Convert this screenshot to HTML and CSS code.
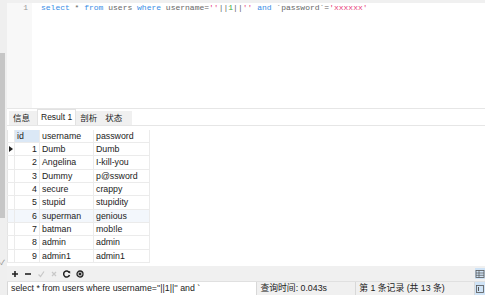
FILE: index.html
```html
<!DOCTYPE html>
<html lang="zh-CN">
<head>
    <meta charset="UTF-8">
    <title>查询</title>
    <link rel="stylesheet" href="styles.css">
</head>
<body>
    <div class="app">
        <div class="side">
            <div class="side-bar"></div>
            <div class="side-mark">✓</div>
        </div>
        <div class="main">
            <div class="editor">
                <div class="gutter">1</div>
                <div class="code"><span class="kw">select</span> * <span class="kw">from</span> users <span class="kw">where</span> username=<span class="str">''</span>||<span class="num">1</span>||<span class="str">''</span> <span class="kw">and</span> `password`=<span class="str">'xxxxxx'</span></div>
            </div>

            <div class="tabs">
                <div class="tab">信息</div>
                <div class="tab active">Result 1</div>
                <div class="tab">剖析</div>
                <div class="tab">状态</div>
            </div>

            <div class="grid-area">
                <table class="grid">
                    <tr class="head">
                        <td class="sel"></td>
                        <td class="c-id on">id</td>
                        <td class="c-user">username</td>
                        <td class="c-pass">password</td>
                    </tr>
                    <tr><td class="sel"><span class="arrow"></span></td><td class="c-id">1</td><td class="c-user">Dumb</td><td class="c-pass">Dumb</td></tr>
                    <tr><td class="sel"></td><td class="c-id">2</td><td class="c-user">Angelina</td><td class="c-pass">I-kill-you</td></tr>
                    <tr><td class="sel"></td><td class="c-id">3</td><td class="c-user">Dummy</td><td class="c-pass">p@ssword</td></tr>
                    <tr><td class="sel"></td><td class="c-id">4</td><td class="c-user">secure</td><td class="c-pass">crappy</td></tr>
                    <tr><td class="sel"></td><td class="c-id">5</td><td class="c-user">stupid</td><td class="c-pass">stupidity</td></tr>
                    <tr class="hover"><td class="sel"></td><td class="c-id">6</td><td class="c-user">superman</td><td class="c-pass">genious</td></tr>
                    <tr><td class="sel"></td><td class="c-id">7</td><td class="c-user">batman</td><td class="c-pass">mob!le</td></tr>
                    <tr><td class="sel"></td><td class="c-id">8</td><td class="c-user">admin</td><td class="c-pass">admin</td></tr>
                    <tr><td class="sel"></td><td class="c-id">9</td><td class="c-user">admin1</td><td class="c-pass">admin1</td></tr>
                </table>
            </div>

            <div class="toolbar">
                <div class="tools">
                    <svg viewBox="0 0 8 8"><path d="M4 1v6M1 4h6" stroke="#222" stroke-width="1.6"/></svg>
                    <svg viewBox="0 0 8 8"><path d="M1 4h6" stroke="#222" stroke-width="1.6"/></svg>
                    <svg viewBox="0 0 8 8"><path d="M1.5 4.5l2 2 3.5-5" stroke="#c8c8c8" stroke-width="1.2" fill="none"/></svg>
                    <svg viewBox="0 0 8 8"><path d="M2 2l4 4M6 2l-4 4" stroke="#c8c8c8" stroke-width="1.2"/></svg>
                    <svg viewBox="0 0 8 8"><path d="M6.3 2.6A3 3 0 1 0 6.5 5" stroke="#222" stroke-width="1.5" fill="none"/><path d="M4.6 1.2h2.6v2.6z" fill="#222"/></svg>
                    <svg viewBox="0 0 8 8"><circle cx="4" cy="4" r="3" stroke="#222" stroke-width="1.3" fill="none"/><path d="M2.6 2.6l2.8 2.8M5.4 2.6l-2.8 2.8" stroke="#222" stroke-width="1.2"/></svg>
                </div>
                <div class="view-btn">
                    <svg viewBox="0 0 10 10"><rect x="1" y="1.5" width="8" height="7" fill="none" stroke="#555" stroke-width="0.8"/><path d="M1 4h8M1 6.3h8M4 1.5v7" stroke="#555" stroke-width="0.7"/></svg>
                </div>
            </div>

            <div class="status">
                <div class="cell sql">select * from users where username=''||1||'' and `</div>
                <div class="cell time">查询时间: 0.043s</div>
                <div class="cell rec">第 1 条记录 (共 13 条)</div>
                <div class="view-btn">
                    <svg viewBox="0 0 10 10"><rect x="1.5" y="1.5" width="7" height="7" fill="none" stroke="#555" stroke-width="0.8"/><path d="M3.5 3v4" stroke="#555" stroke-width="1"/></svg>
                </div>
            </div>
        </div>
    </div>
</body>
</html>
```

FILE: styles.css
```css
body {
    margin: 0;
    font-family: "Liberation Sans", "Noto Sans CJK SC", sans-serif;
    color: #222;
    background-color: #fff;
}
.app {
    display: flex;
    width: 485px;
    height: 295px;
    overflow: hidden;
}
.side {
    width: 7px;
    flex-shrink: 0;
    background-color: #efefef;
    display: flex;
    flex-direction: column;
}
.side-bar {
    margin-top: 53px;
    width: 5px;
    height: 165px;
    background-color: #c6c6c6;
}
.side-mark {
    margin-top: 41px;
    font-size: 7px;
    color: #888;
    line-height: 8px;
}
.main {
    flex: 1;
    display: flex;
    flex-direction: column;
    min-width: 0;
}
.editor {
    height: 105px;
    flex-shrink: 0;
    border-top: 3px solid #f0f0f0;
    display: flex;
}
.gutter {
    width: 21px;
    padding-right: 4px;
    background-color: #f8f8f8;
    text-align: right;
    font-family: "Liberation Mono", monospace;
    font-size: 8px;
    line-height: 10px;
    color: #999;
}
.code {
    padding-left: 9px;
    font-family: "Liberation Mono", monospace;
    font-size: 8px;
    line-height: 10px;
    color: #666;
    white-space: pre;
}
.kw { color: #3a8ee6; }
.str { color: #e8417b; }
.num { color: #3da83d; }

.tabs {
    height: 16px;
    flex-shrink: 0;
    border-top: 1px solid #e6e6e6;
    border-bottom: 1px solid #e6e6e6;
    display: flex;
    align-items: flex-end;
    padding-left: 2px;
}
.tab {
    height: 14px;
    line-height: 14px;
    font-size: 8.5px;
    padding: 0 4px;
    background-color: #f0f0f0;
    color: #222;
}
.tab:first-child {
    width: 20px;
}
.tab.active {
    background-color: #fff;
    border: 1px solid #e2e2e2;
    border-bottom: none;
    height: 15px;
    padding: 0 3px;
}
.tab:last-child {
    width: 23px;
}

.grid-area {
    flex: 1;
    min-height: 0;
    overflow: hidden;
    padding-top: 4px;
}
.grid {
    border-collapse: collapse;
    font-size: 8.8px;
}
.grid td {
    height: 12.33px;
    padding: 0 2px;
    border-bottom: 1px solid #ebebeb;
    border-right: 1px solid #ebebeb;
    line-height: 12px;
    white-space: nowrap;
}
.grid .sel {
    width: 3px;
    border-left: 1px solid #e4e4e4;
    padding: 0 1px;
}
.grid .head td {
    height: 12px;
}
.grid .c-id {
    width: 20px;
    text-align: right;
}
.grid .head .c-id {
    text-align: left;
}
.grid .c-id.on {
    background-color: #dbe8f6;
}
.grid .c-user {
    width: 49px;
}
.grid .c-pass {
    width: 51px;
}
.grid .hover td {
    background-color: #f3f7fc;
}
.arrow {
    display: block;
    width: 0;
    height: 0;
    border-top: 3px solid transparent;
    border-bottom: 3px solid transparent;
    border-left: 4px solid #222;
}

.toolbar {
    height: 15px;
    flex-shrink: 0;
    background-color: #f0f0f0;
    display: flex;
    align-items: center;
    justify-content: space-between;
}
.tools {
    display: flex;
    gap: 5px;
    padding-left: 4px;
}
.tools svg {
    width: 8px;
    height: 8px;
}
.view-btn {
    width: 10px;
    height: 11px;
    background-color: #cfe3f6;
    display: flex;
    align-items: center;
    justify-content: center;
}
.view-btn svg {
    width: 10px;
    height: 10px;
}
.status {
    height: 13px;
    flex-shrink: 0;
    border-top: 1px solid #e0e0e0;
    background-color: #f0f0f0;
    display: flex;
    font-size: 8.8px;
    line-height: 13px;
}
.status .cell {
    border-right: 1px solid #d8d8d8;
    white-space: nowrap;
    overflow: hidden;
    padding-left: 3px;
}
.status .sql {
    width: 246px;
    background-color: #fff;
    border-left: 1px solid #d8d8d8;
}
.status .time {
    width: 95px;
}
.status .rec {
    width: 115px;
}
.status .view-btn {
    margin-left: auto;
    height: 13px;
}
```
